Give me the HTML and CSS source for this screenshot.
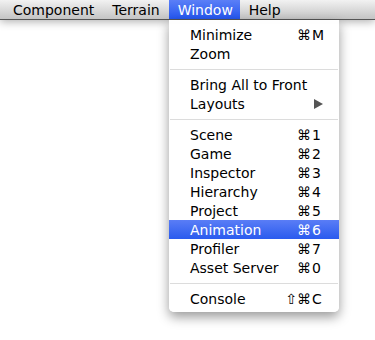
FILE: index.html
```html
<!DOCTYPE html>
<html lang="en">
<head>
  <meta charset="UTF-8" />
  <title>Window Menu</title>
  <link rel="stylesheet" href="styles.css">
</head>
<body>
  <div class="screen">
    <div class="menubar">
      <div class="menu-title">Component</div>
      <div class="menu-title">Terrain</div>
      <div class="menu-title open">Window</div>
      <div class="menu-title">Help</div>
    </div>

    <div class="dropdown">
      <div class="item"><span class="label">Minimize</span><span class="mods">⌘</span><span class="key">M</span></div>
      <div class="item"><span class="label">Zoom</span></div>
      <div class="sep"></div>
      <div class="item"><span class="label">Bring All to Front</span></div>
      <div class="item"><span class="label">Layouts</span><span class="arrow"></span></div>
      <div class="sep"></div>
      <div class="item"><span class="label">Scene</span><span class="mods">⌘</span><span class="key">1</span></div>
      <div class="item"><span class="label">Game</span><span class="mods">⌘</span><span class="key">2</span></div>
      <div class="item"><span class="label">Inspector</span><span class="mods">⌘</span><span class="key">3</span></div>
      <div class="item"><span class="label">Hierarchy</span><span class="mods">⌘</span><span class="key">4</span></div>
      <div class="item"><span class="label">Project</span><span class="mods">⌘</span><span class="key">5</span></div>
      <div class="item active"><span class="label">Animation</span><span class="mods">⌘</span><span class="key">6</span></div>
      <div class="item"><span class="label">Profiler</span><span class="mods">⌘</span><span class="key">7</span></div>
      <div class="item"><span class="label">Asset Server</span><span class="mods">⌘</span><span class="key">0</span></div>
      <div class="sep"></div>
      <div class="item"><span class="label">Console</span><span class="mods">⇧⌘</span><span class="key">C</span></div>
    </div>
  </div>
</body>
</html>
```

FILE: styles.css
```css
* {
  box-sizing: border-box;
}

body {
  margin: 0;
  background: #fff;
  font-family: 'DejaVu Sans', 'Lucida Grande', sans-serif;
  font-size: 14px;
  color: #000;
}

.screen {
  position: relative;
  height: 340px;
}

.menubar {
  display: flex;
  height: 20px;
  padding-left: 4px;
  background: linear-gradient(to bottom, #f2f2f2, #d6d6d6 60%, #c4c4c4);
  border-bottom: 1px solid #555;
  box-shadow: 0 2px 8px rgba(0, 0, 0, 0.3);
}

.menu-title {
  padding: 1px 9px 0;
  line-height: 18px;
  height: 19px;
  color: #000;
}

.menu-title.open {
  color: #fff;
  background: linear-gradient(to bottom, #5b7ff7, #2456ee);
  width: 71px;
}

/* the open Window menu, hanging under its title */
.dropdown {
  position: absolute;
  top: 20px;
  left: 169px;
  width: 170px;
  padding: 5px 0 4px;
  background: rgba(255, 255, 255, 0.97);
  border-radius: 0 0 5px 5px;
  box-shadow: 0 5px 12px rgba(0, 0, 0, 0.4);
  color: #000;
}

.item {
  display: flex;
  align-items: center;
  height: 19px;
  line-height: 18px;
  padding: 1px 13px 0 21px;
  white-space: nowrap;
}

.item .label {
  flex: 1;
}

.item .mods {
  text-align: right;
}

.item .key {
  width: 14px;
  margin-left: 1px;
}

.item.active {
  background: linear-gradient(to bottom, #5a7df6, #2a5bee);
  color: #fff;
}

.arrow {
  width: 0;
  height: 0;
  margin-right: 3px;
  border-top: 5px solid transparent;
  border-bottom: 5px solid transparent;
  border-left: 9px solid #555;
}

.sep {
  height: 12px;
  padding: 6px 1px 0;
}

.sep::before {
  content: "";
  display: block;
  height: 1px;
  background: #dcdcdc;
}
```
